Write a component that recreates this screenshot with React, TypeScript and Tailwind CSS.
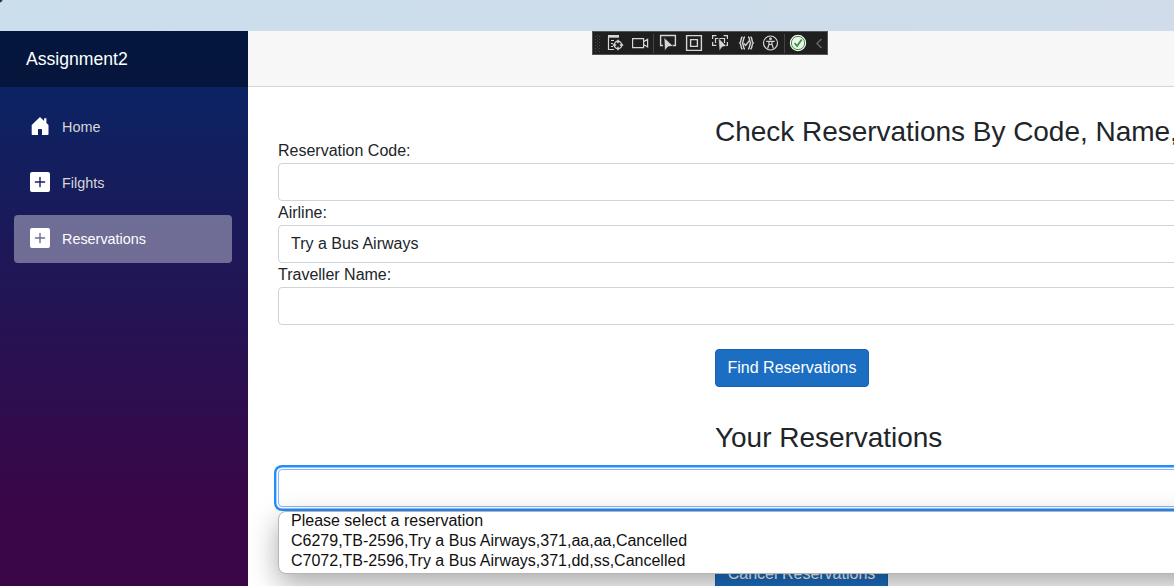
import React from "react";

function HomeIcon() {
  return (
    <svg className="size-5 shrink-0" viewBox="0 0 20 20" fill="white">
      <path d="M10 1 1.7 9.1V18.2q0 .8.8.8H8v-5.2q0-.7.7-.7h2.6q.7 0 .7.7V19h5.7q.8 0 .8-.8V9.1L16.4 7V2.3h-2.3v2.6z" />
    </svg>
  );
}

function PlusIcon() {
  return (
    <svg className="size-5 shrink-0" viewBox="0 0 20 20">
      <path
        fill="white"
        fillRule="evenodd"
        d="M2 0h16a2 2 0 0 1 2 2v16a2 2 0 0 1-2 2H2a2 2 0 0 1-2-2V2a2 2 0 0 1 2-2zM9.3 5.3v4H5.3q-.6 0-.6.7t.6.7h4v4q0 .6.7.6t.7-.6v-4h4q.6 0 .6-.7t-.6-.7h-4v-4q0-.6-.7-.6t-.7.6z"
      />
    </svg>
  );
}

function NavItem({ label, icon, active = false }: { label: string; icon: React.ReactNode; active?: boolean }) {
  return (
    <a
      className={
        active
          ? "flex h-12 items-center gap-3 rounded bg-white/[0.37] px-4 pb-0.5 text-white"
          : "flex h-12 items-center gap-3 rounded px-4 pb-0.5 text-[#d7d7d7]"
      }
    >
      {icon}
      <span className="pt-0.5 text-[14.4px] leading-5">{label}</span>
    </a>
  );
}

function DebugToolbar() {
  return (
    <svg
      className="absolute top-[31px] left-[592px]"
      width="236"
      height="24"
      viewBox="0 0 236 24"
      fill="none"
      stroke="#d6d6d6"
      strokeWidth="1.2"
    >
      <rect x=".5" y=".5" width="235" height="23" fill="#1f1f1f" stroke="#555" strokeWidth="1" />
      <path d="M3.5 5v16M7.5 5v16" stroke="#4b4b4b" strokeDasharray="1 2" />
      <path d="M5.5 3.5v16" stroke="#4b4b4b" strokeDasharray="1 2" />
      <path d="M61.5 3v19M192.5 3v19" stroke="#444" strokeWidth="1" />
      <g>
        <path d="M16 4h11v2.7H16z" fill="#d6d6d6" stroke="none" />
        <path d="M16.5 6v12.5H22M19 9.5h3M19 12.5h2M19 15.5h2" />
        <circle cx="26" cy="14" r="3.7" strokeWidth="1.4" />
        <path d="M26 8.8v3.4M26 15.8v3.4M20.8 14h3.4M27.8 14h3.4" strokeWidth="1.4" />
      </g>
      <path d="M40.6 7.6h11v9h-11zM51.6 10.8l4-2.5v7.6l-4-2.5" />
      <path d="M80 14.5h3.4v-10H68.6v10H71" strokeWidth="1.4" />
      <path d="m72 6.5.8 13.2 3.2-3.9 5.2-.8z" fill="#d6d6d6" stroke="#1f1f1f" strokeWidth=".6" />
      <path d="M94.6 4.6h14.8v14.8H94.6zM98.6 8.6h6.8v6.8h-6.8z" strokeWidth="1.4" />
      <path d="M120.6 8V4.6h3.8M131.6 4.6h3.8V8M120.6 11v3.4h3.8M135.4 11v3.4H134M123.5 12V7.5h9V12" />
      <path d="m129 7 .8 13 2.9-4 4.2-.9z" transform="translate(-2.5 0)" fill="#d6d6d6" stroke="#1f1f1f" strokeWidth=".6" />
      <g strokeWidth="1.4">
        <path d="M150.6 6c-2.2 0-.8 4.6-2.8 6 2 1.4.6 6 2.8 6M158.4 6c2.2 0 .8 4.6 2.8 6-2 1.4-.6 6-2.8 6" />
        <path d="M153 6c-2 0-1 4-2.6 6 1.6 2 .6 6 2.6 6M156 6c2 0 1 4 2.6 6-1.6 2-.6 6-2.6 6" />
        <path d="m151.8 12.4 1.8 2 4-5" />
      </g>
      <circle cx="178.5" cy="12" r="7" />
      <circle cx="178.5" cy="7.8" r="1.4" fill="#d6d6d6" stroke="none" />
      <path d="M174.3 10.3h8.4M177 10.5v3l-1.4 4M180 10.5v3l1.4 4M177 13.5h3" />
      <circle cx="206" cy="12" r="7.6" fill="#f2f2f2" stroke="#f2f2f2" />
      <circle cx="206" cy="12" r="6.6" stroke="#319b35" strokeWidth="1" />
      <path d="m202.5 12 2.6 3 4.6-6.5" stroke="#319b35" strokeWidth="1.8" />
      <path d="m229.5 8-4.5 4.5 4.5 4.5" stroke="#666" strokeWidth="1.5" />
    </svg>
  );
}

function Field({ label, value }: { label: string; value?: string }) {
  return (
    <div>
      <div className="h-6">{label}</div>
      <div className="h-[38px] rounded border border-[#ced4da] bg-white px-3 pt-1.5">{value}</div>
    </div>
  );
}

const options = [
  "Please select a reservation",
  "C6279,TB-2596,Try a Bus Airways,371,aa,aa,Cancelled",
  "C7072,TB-2596,Try a Bus Airways,371,dd,ss,Cancelled",
];

export default function App() {
  return (
    <div className="relative flex h-[586px] w-[1174px] flex-col overflow-hidden bg-white font-['Liberation_Sans',Arial,sans-serif] text-base leading-6 text-[#212529]">
      <div className="h-[31px] shrink-0 bg-[radial-gradient(circle_at_0_0,#3a2a2a_0px,#3a2a2a_1.5px,transparent_3px),linear-gradient(90deg,#cbdeec,#d0dcea)]" />
      <div className="flex min-h-0 flex-1">
        <aside className="z-20 w-[248px] shrink-0 bg-[linear-gradient(180deg,#052767_0px,#3a0647_479px)]">
          <div className="h-14 bg-black/40 pt-4 pl-[26px] text-[17.6px] leading-6 text-white">Assignment2</div>
          <nav className="flex flex-col gap-2 pt-4 pr-4 pl-3.5">
            <NavItem label="Home" icon={<HomeIcon />} />
            <NavItem label="Filghts" icon={<PlusIcon />} />
            <NavItem label="Reservations" icon={<PlusIcon />} active />
          </nav>
        </aside>
        <main className="flex min-w-0 flex-1 flex-col">
          <div className="h-14 shrink-0 border-b border-[#d6d5d5] bg-[#f7f7f7]" />
          <div className="-mr-[240px] pl-[30px]">
            <h3 className="h-[52px] pt-7 pl-[437px] text-[28px] leading-[34px] tracking-[-0.03px] whitespace-nowrap">
              Check Reservations By Code, Name,
            </h3>
            <Field label="Reservation Code:" />
            <Field label="Airline:" value="Try a Bus Airways" />
            <Field label="Traveller Name:" />
            <button className="mt-6 ml-[437px] block h-[38px] w-[154px] rounded border border-[#1861ac] bg-[#1b6ec2] pb-px text-white">
              Find Reservations
            </button>
            <h3 className="h-[82px] pt-[34px] pl-[437px] text-[28px] leading-[34px] tracking-[-0.03px]">Your Reservations</h3>
            <div className="relative">
              <div className="h-[38px] rounded border border-[#86b7fe] bg-white shadow-[0_0_0_1.6px_#fff,0_0_0_4px_#258cfb]" />
              <div className="absolute top-[42px] left-0 z-10 h-[63px] w-full rounded-lg border border-[#b5b5b5] bg-white px-3 shadow-[0_10px_28px_rgba(0,0,0,0.34)]">
                {options.map((o) => (
                  <div key={o} className="h-5 leading-[18px] text-[#101010]">
                    {o}
                  </div>
                ))}
              </div>
            </div>
            <button className="mt-12 ml-[437px] block h-[38px] w-[173px] rounded border border-[#1861ac] bg-[#1b6ec2] pb-px text-white">
              Cancel Reservations
            </button>
          </div>
        </main>
      </div>
      <DebugToolbar />
    </div>
  );
}
